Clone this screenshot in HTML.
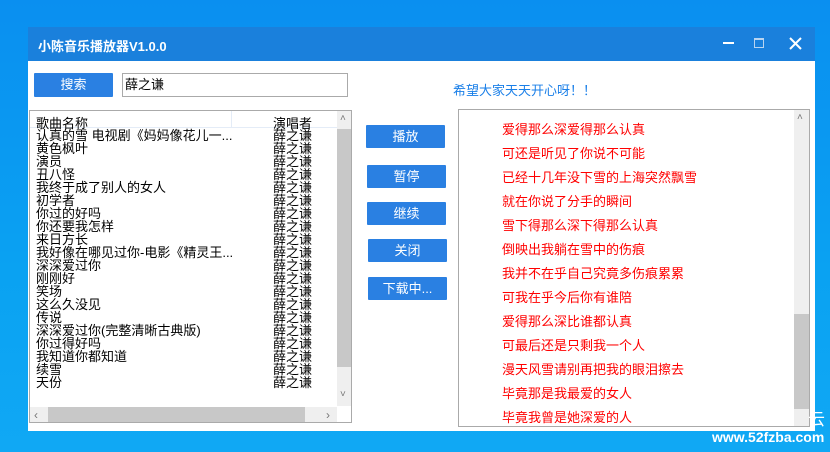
<!DOCTYPE html>
<html><head><meta charset="utf-8"><style>
body{margin:0;width:830px;height:452px;overflow:hidden;background:linear-gradient(180deg,#0a8ff0 0%,#0aa2f2 60%,#10a8f4 100%);position:relative;font-family:"Liberation Sans","Noto Sans CJK SC",sans-serif}
.a{position:absolute}
.win{left:28px;top:27px;width:787px;height:404px;background:#fff}
.tb{left:28px;top:27px;width:787px;height:34px;background:#1a80dc;color:#fff;font-weight:bold;font-size:13px}
.btn{background:#2a80e2;color:#fff;font-size:13px;text-align:center;line-height:23px;height:23px;width:79px;border-radius:1px}
.row{position:absolute;left:6px;font-size:13px;line-height:13px;color:#000;white-space:nowrap}
.s{position:absolute;left:243px;font-size:13px;line-height:13px}
.ly{position:absolute;left:43px;font-size:13px;color:#f00;line-height:16px;white-space:nowrap}
</style></head><body>
<div class="a win"></div>
<div class="a tb"><span class="a" style="left:10px;top:9px">小陈音乐播放器V1.0.0</span>
<div class="a" style="left:695px;top:15px;width:11px;height:2px;background:#fff"></div>
<div class="a" style="left:726px;top:11px;width:8px;height:7px;border:1px solid #b8d4f0;border-top-width:2px"></div>
<svg class="a" style="left:761px;top:10px" width="13" height="13"><path d="M1 1L12 12M12 1L1 12" stroke="#fff" stroke-width="2"/></svg>
</div>
<div class="a btn" style="left:34px;top:73px;height:24px;line-height:24px">搜索</div>
<div class="a" style="left:122px;top:73px;width:224px;height:22px;border:1px solid #aaa;font-size:13px;line-height:22px;text-indent:2px">薛之谦</div>
<div class="a" style="left:29px;top:110px;width:321px;height:311px;border:1px solid #aaa;overflow:hidden">
<div class="a" style="left:0;top:0;width:307px;height:16px;border-bottom:1px solid #e4ecf7"></div>
<div class="a" style="left:201px;top:0;width:1px;height:16px;background:#e4ecf7"></div>
<span class="a" style="left:6px;top:2px;font-size:13px">歌曲名称</span><span class="a" style="left:243px;top:2px;font-size:13px">演唱者</span>
<div id="rows"></div>
<div class="a" style="left:307px;top:0;width:16px;height:295px;background:#efefef"></div>
<div class="a" style="left:307px;top:18px;width:16px;height:238px;background:#c8c8c8"></div>
<div class="a" style="left:310px;top:2px;font-size:10px;color:#777">˄</div>
<div class="a" style="left:310px;top:278px;font-size:10px;color:#777">˅</div>
<div class="a" style="left:0;top:296px;width:307px;height:16px;background:#efefef"></div>
<div class="a" style="left:18px;top:296px;width:257px;height:16px;background:#c8c8c8"></div>
<div class="a" style="left:4px;top:297px;font-size:12px;color:#777">‹</div>
<div class="a" style="left:296px;top:297px;font-size:12px;color:#777">›</div>
</div>
<div class="a btn" style="left:366px;top:125px">播放</div>
<div class="a btn" style="left:367px;top:165px">暂停</div>
<div class="a btn" style="left:367px;top:202px">继续</div>
<div class="a btn" style="left:368px;top:239px">关闭</div>
<div class="a btn" style="left:368px;top:277px">下载中...</div>
<div class="a" style="left:453px;top:80px;font-size:13px;color:#1a7fe8">希望大家天天开心呀！！</div>
<div class="a" style="left:458px;top:109px;width:350px;height:316px;border:1px solid #aaa;overflow:hidden" id="lyr">
<div class="a" style="left:335px;top:0;width:16px;height:316px;background:#efefef"></div>
<div class="a" style="left:335px;top:204px;width:16px;height:95px;background:#c8c8c8"></div>
<div class="a" style="left:338px;top:2px;font-size:10px;color:#777">˄</div>
</div>
<div class="a" style="left:712px;top:429px;font-size:14px;font-weight:bold;color:#fff">www.52fzba.com</div>
<div class="a" style="left:808px;top:405px;font-size:17px;color:#fff">云</div>
<script>
var songs=["认真的雪 电视剧《妈妈像花儿一...","黄色枫叶","演员","丑八怪","我终于成了别人的女人","初学者","你过的好吗","你还要我怎样","来日方长","我好像在哪见过你-电影《精灵王...","深深爱过你","刚刚好","笑场","这么久没见","传说","深深爱过你(完整清晰古典版)","你过得好吗","我知道你都知道","续雪","天份"];
var h="";songs.forEach(function(s,i){var t=18+i*13;h+='<div class="row" style="top:'+t+'px">'+s+'</div><div class="s" style="top:'+t+'px">薛之谦</div>';});
document.getElementById("rows").innerHTML=h;
var ly=["爱得那么深爱得那么认真","可还是听见了你说不可能","已经十几年没下雪的上海突然飘雪","就在你说了分手的瞬间","雪下得那么深下得那么认真","倒映出我躺在雪中的伤痕","我并不在乎自己究竟多伤痕累累","可我在乎今后你有谁陪","爱得那么深比谁都认真","可最后还是只剩我一个人","漫天风雪请别再把我的眼泪擦去","毕竟那是我最爱的女人","毕竟我曾是她深爱的人"];
var g="";ly.forEach(function(s,i){g+='<div class="ly" style="top:'+(12+i*24)+'px">'+s+'</div>';});
document.getElementById("lyr").insertAdjacentHTML("beforeend",g);
</script>
</body></html>
